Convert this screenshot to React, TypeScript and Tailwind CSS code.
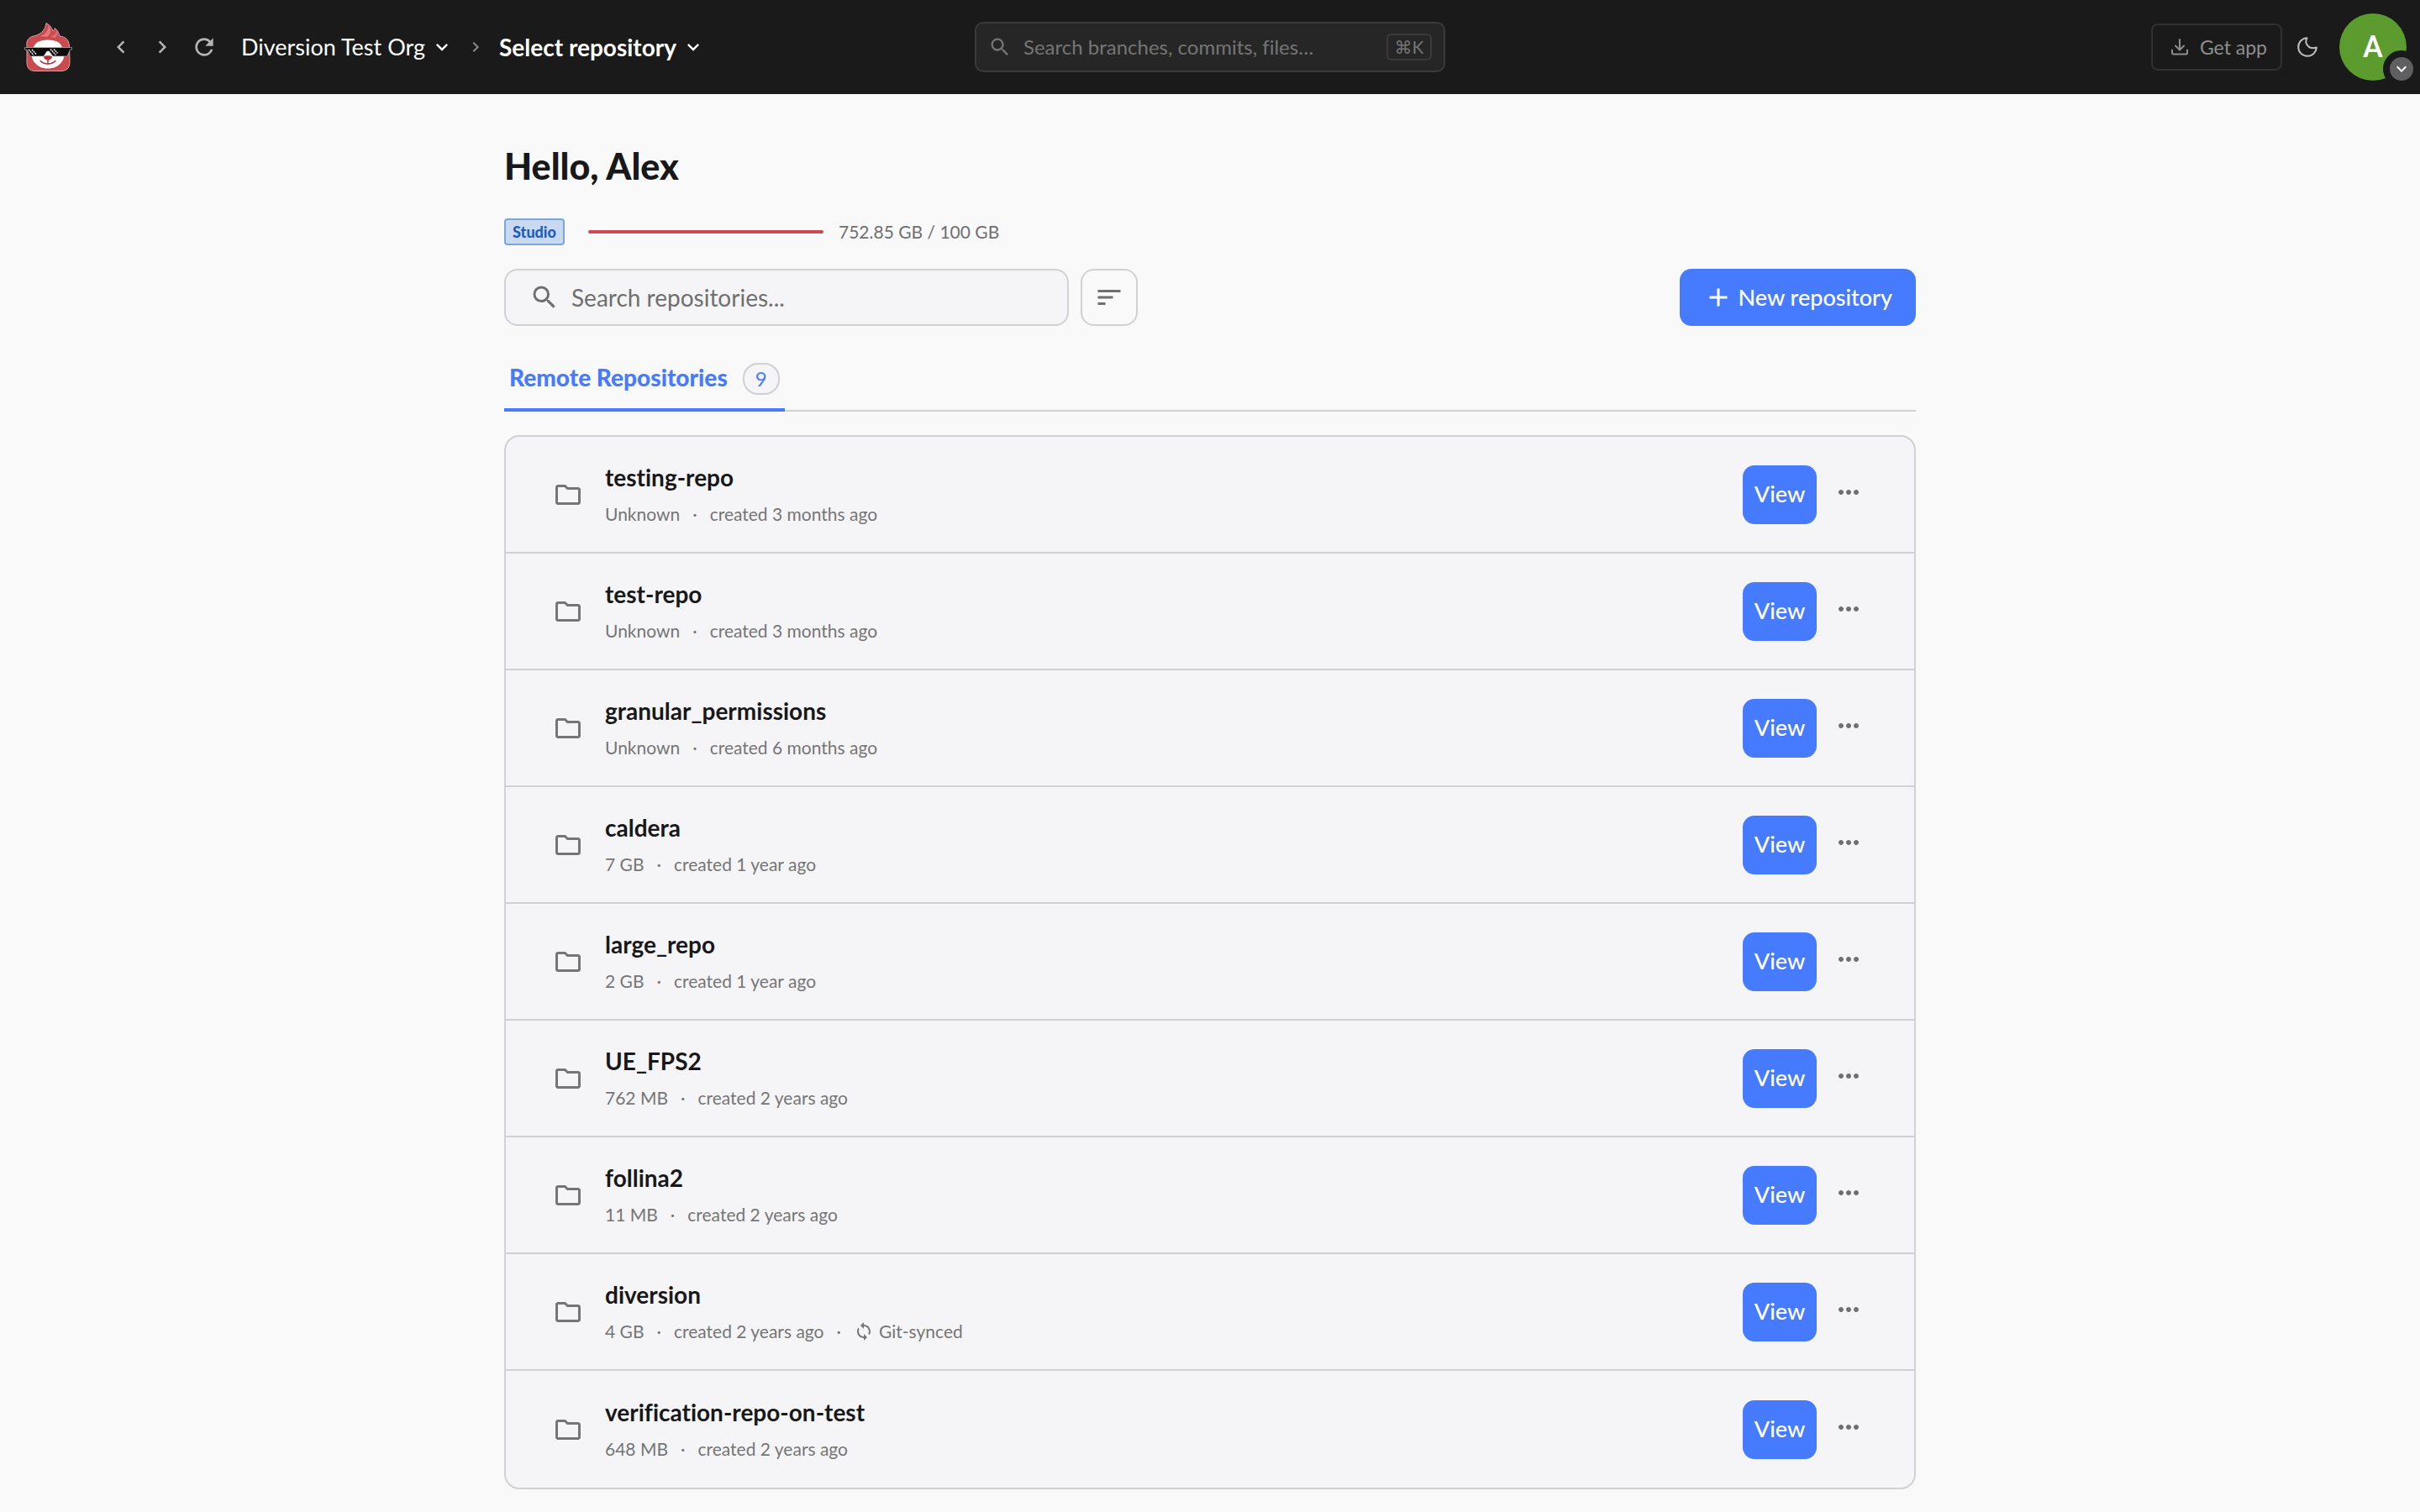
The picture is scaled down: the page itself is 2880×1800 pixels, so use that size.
import { useState } from "react";
import {
  MdAdd,
  MdChevronLeft,
  MdChevronRight,
  MdExpandMore,
  MdMoreHoriz,
  MdOutlineFolder,
  MdRefresh,
  MdSearch,
  MdSort,
  MdSync,
} from "react-icons/md";

type Repository = {
  name: string;
  size: string;
  created: string;
  gitSynced?: boolean;
};

const repositories: Repository[] = [
  { name: "testing-repo", size: "Unknown", created: "created 3 months ago" },
  { name: "test-repo", size: "Unknown", created: "created 3 months ago" },
  { name: "granular_permissions", size: "Unknown", created: "created 6 months ago" },
  { name: "caldera", size: "7 GB", created: "created 1 year ago" },
  { name: "large_repo", size: "2 GB", created: "created 1 year ago" },
  { name: "UE_FPS2", size: "762 MB", created: "created 2 years ago" },
  { name: "follina2", size: "11 MB", created: "created 2 years ago" },
  { name: "diversion", size: "4 GB", created: "created 2 years ago", gitSynced: true },
  { name: "verification-repo-on-test", size: "648 MB", created: "created 2 years ago" },
];

function SlothLogo() {
  return (
    <svg viewBox="0 0 58 58" className="size-[58px]" aria-hidden="true">
      <path
        d="M3 28C2 21 5 17 13 15.500C21 13 25 8 26 0.500C31 3 33 7 34 10C36 9 36 7.500 36 6.500C40 9 41 13 42 16C49 17 53 20 53.500 28L54 47C54 54 50 57.500 44 57.500H13C6 57.500 3 54 3 47Z"
        fill="#cb4a50"
        stroke="#d9a3a5"
        strokeWidth="1"
      />
      <path d="M19 16C27 13 29 8 28 3C33 8 32 13 27 17Z" fill="#e27a7c" />
      <path d="M31 17C36 15 38 12 37.500 9C41 13 39 16 36 18Z" fill="#dd7074" />
      <path
        d="M28 20.500C38 20.500 44 24 45 30C48 35 48 42 45 46C41 52 35 54.500 28 54.500C21 54.500 15 52 11 46C8 42 8 35 11 30C12 24 18 20.500 28 20.500Z"
        fill="#fff"
      />
      <path d="M0.500 29.500H56.500V32H54.500L51 40H34L29.500 34H27L23 40H7L3 32H0.500Z" fill="#0c0c0c" stroke="#c9c9c9" strokeWidth="0.6" />
      <path d="M5 32L11 38.500M9 32L14 37.500M31 31.500L37.500 38.500M35 31.500L39.500 36.500" stroke="#e8e8e8" strokeWidth="1.5" strokeDasharray="2 0.7" />
      <path d="M23 40.500C24 38.800 32 38.800 33 40.500C33 43 30 44.500 28 44.500C26 44.500 23 43 23 40.500Z" fill="#b92f35" />
      <path d="M19 45.500C23 50 33 50 37 45.500M28 44V48" fill="none" stroke="#b92f35" strokeWidth="1.5" strokeLinecap="round" />
    </svg>
  );
}

function DownloadIcon() {
  return (
    <svg viewBox="0 0 20 20" className="size-5" fill="none" stroke="currentColor" strokeWidth="2" strokeLinecap="round" strokeLinejoin="round" aria-hidden="true">
      <path d="M10 1V13M5 8.500L10 13.500L15 8.500M1 13.500V17C1 18 1.500 18.500 2.500 18.500H17.500C18.500 18.500 19 18 19 17V13.500" />
    </svg>
  );
}

function MoonIcon() {
  return (
    <svg viewBox="0 0 24 24" className="size-6" fill="none" stroke="currentColor" strokeWidth="2" strokeLinejoin="round" aria-hidden="true">
      <path d="M11.500 1.200C8 7.500 13.500 15.500 22.800 12.500C22.300 18.500 17.800 22.800 12 22.800C6 22.800 1.200 18 1.200 12C1.200 6.200 5.700 1.500 11.500 1.200Z" />
    </svg>
  );
}

function Header() {
  return (
    <header className="grid h-28 grid-cols-[1fr_560px_1fr] items-center bg-[#1a1a1a] px-4">
      <div className="flex items-center pl-[13px] text-[27px] text-white">
        <a href="#" aria-label="Home" className="mr-[42px]">
          <SlothLogo />
        </a>
        <div className="flex gap-[19px] text-[30px] text-[#b5b5b5]">
          <button type="button" aria-label="Back">
            <MdChevronLeft />
          </button>
          <button type="button" aria-label="Forward">
            <MdChevronRight />
          </button>
          <button type="button" aria-label="Refresh" className="text-[32px]">
            <MdRefresh />
          </button>
        </div>
        <button type="button" className="ml-7 flex items-center gap-1.5">
          Diversion Test Org
          <MdExpandMore className="size-7" />
        </button>
        <MdChevronRight className="mr-4 ml-3.5 size-6 text-[#8a8a8a]" />
        <button type="button" className="flex items-center gap-1.5 text-[28px] font-bold">
          Select repository
          <MdExpandMore className="size-7" />
        </button>
      </div>

      <label className="flex h-15 items-center rounded-[10px] border-2 border-[#3a3a3a] bg-[#262626] px-3.5 text-[#757575]">
        <MdSearch className="size-7 shrink-0" />
        <input
          type="search"
          aria-label="Search branches, commits, files"
          placeholder="Search branches, commits, files…"
          className="ml-3.5 min-w-0 flex-1 bg-transparent text-[24px] outline-none placeholder:text-[#757575]"
        />
        <kbd className="flex h-8 w-[54px] items-center justify-center rounded-md border-2 border-[#3a3a3a] font-[Lato,'DejaVu_Sans',sans-serif] text-[21px]">
          ⌘K
        </kbd>
      </label>

      <div className="flex items-center justify-end">
        <button type="button" className="flex h-14 items-center gap-3.5 rounded-lg border-2 border-[#303030] pr-4 pl-[22px] text-[23px] text-[#8e8e8e]">
          <DownloadIcon />
          Get app
        </button>
        <button type="button" aria-label="Dark theme" className="mr-[26px] ml-[18px] text-[#bdbdbd]">
          <MoonIcon />
        </button>
        <button type="button" aria-label="Account" className="relative flex size-20 items-center justify-center rounded-full bg-[#5c9b2e] font-[Roboto,sans-serif] text-[36px] font-medium text-white">
          A
          <span className="absolute -right-4 -bottom-2 flex size-11 items-center justify-center rounded-full border-8 border-[#1a1a1a] bg-[#5f5f61]">
            <MdExpandMore className="size-6" />
          </span>
        </button>
      </div>
    </header>
  );
}

function RepositoryRow({ repository }: { repository: Repository }) {
  return (
    <li className="flex h-[139px] items-center border-b-2 border-[#d1d1d3] pr-15 pl-14 last:border-b-0">
      <MdOutlineFolder className="size-9 shrink-0 text-[#757575]" />
      <div className="ml-[26px] flex-1">
        <h2 className="text-[28px] leading-9 font-bold text-[#18181a]">{repository.name}</h2>
        <div className="mt-2.5 flex items-center gap-[15px] text-[21px] leading-8 text-[#757575]">
          <span>{repository.size}</span>
          <span>·</span>
          <span>{repository.created}</span>
          {repository.gitSynced ? (
            <>
              <span>·</span>
              <span className="flex items-center gap-1.5">
                <MdSync className="size-6" />
                Git-synced
              </span>
            </>
          ) : null}
        </div>
      </div>
      <button type="button" className="h-[70px] w-[88px] rounded-[14px] bg-[#477bff] text-[27px] font-medium text-white">
        View
      </button>
      <button type="button" aria-label={`More actions for ${repository.name}`} className="ml-5 pb-1.5 text-[36px] text-[#6f6f6f]">
        <MdMoreHoriz />
      </button>
    </li>
  );
}

export default function App() {
  const [query, setQuery] = useState("");
  const visible = repositories.filter((repository) => repository.name.toLowerCase().includes(query.toLowerCase()));

  return (
    <div className="min-h-screen bg-[#f9f9f9] font-[Lato,sans-serif] [font-variant-ligatures:none]">
      <Header />
      <main className="mx-auto max-w-[1680px] pt-15 pb-7">
        <h1 className="text-[43px] leading-[52px] font-black text-[#18181a]">Hello, Alex</h1>

        <div className="mt-9 flex h-8 items-center">
          <span className="flex h-8 w-[72px] items-center justify-center rounded border-2 border-[#7ba6dc] bg-[#c9daf0] text-[18px] font-black text-[#1d5dc0]">
            Studio
          </span>
          <div className="ml-7 h-1 w-[280px] rounded-full bg-[#cd4b50]" />
          <span className="ml-[18px] text-[21px] text-[#6f6f6f]">752.85 GB / 100 GB</span>
        </div>

        <div className="mt-7 flex h-[68px]">
          <label className="flex w-[672px] items-center rounded-2xl border-2 border-[#d1d1d3] bg-[#f5f5f7] pl-7 text-[#6f6f6f]">
            <MdSearch className="size-9 shrink-0" />
            <input
              type="search"
              aria-label="Search repositories"
              placeholder="Search repositories..."
              value={query}
              onChange={(event) => setQuery(event.target.value)}
              className="ml-3.5 min-w-0 flex-1 bg-transparent text-[28px] outline-none placeholder:text-[#6f6f6f]"
            />
          </label>
          <button type="button" aria-label="Sort" className="ml-3.5 flex w-[68px] items-center justify-center rounded-2xl border-2 border-[#d1d1d3] text-[36px] text-[#6f6f6f]">
            <MdSort />
          </button>
          <button type="button" className="ml-auto flex items-center gap-1.5 rounded-[14px] bg-[#477bff] px-7 text-[27px] font-medium text-white">
            <MdAdd className="size-9" />
            New repository
          </button>
        </div>

        <div className="mt-8 flex border-b-2 border-[#d1d1d3]">
          <button type="button" className="-mb-0.5 flex h-[70px] items-start gap-[18px] border-b-4 border-[#477bff] px-1.5 pt-3 text-[28px] leading-[34px] font-black text-[#477bff]">
            Remote Repositories
            <span className="flex h-[38px] w-11 items-center justify-center rounded-[18px] border-2 border-[#d1d1d3] bg-[#f5f5f7] text-[24px] font-normal">
              9
            </span>
          </button>
        </div>

        <ul className="mt-7 rounded-[18px] border-2 border-[#d1d1d3] bg-[#f5f5f7]">
          {visible.map((repository) => (
            <RepositoryRow key={repository.name} repository={repository} />
          ))}
        </ul>
      </main>
    </div>
  );
}
